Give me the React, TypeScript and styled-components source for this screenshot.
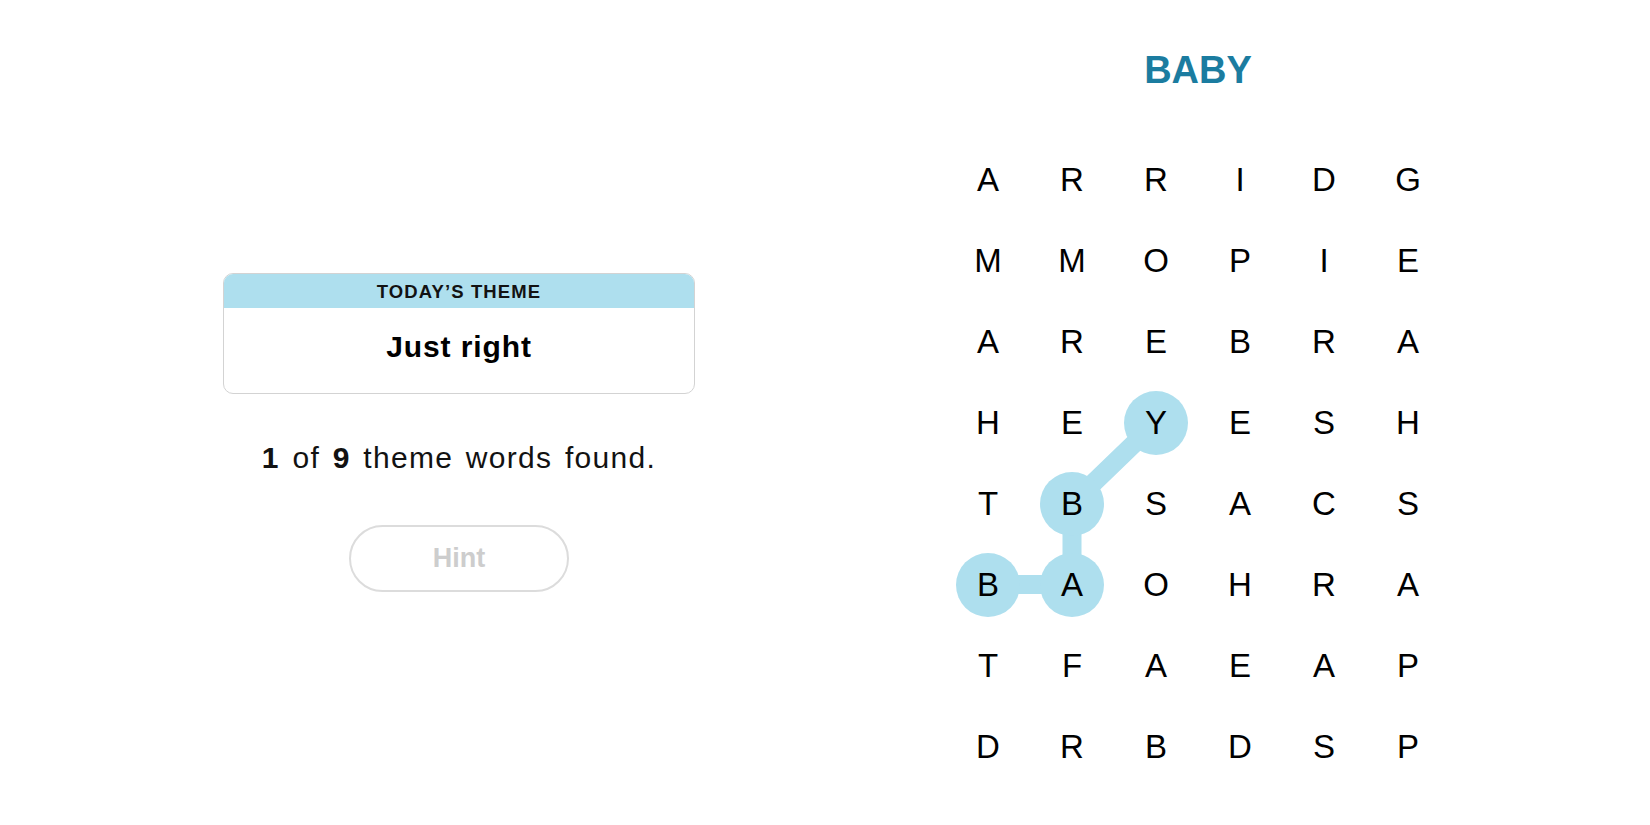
import styled, { createGlobalStyle } from 'styled-components'

const GlobalStyle = createGlobalStyle`
  html, body {
    margin: 0;
    padding: 0;
    background: #ffffff;
  }
  body {
    font-family: "Liberation Sans", Arial, sans-serif;
    color: #121212;
  }
`

const CELL_W = 84
const CELL_H = 81

const board = [
  'ARRIDG',
  'MMOPIE',
  'AREBRA',
  'HEYESH',
  'TBSACS',
  'BAOHRA',
  'TFAEAP',
  'DRBDSP',
]

// the word being traced: BABY, as [row, col]
const path: [number, number][] = [
  [5, 0],
  [5, 1],
  [4, 1],
  [3, 2],
]

const isOnPath = (r: number, c: number) => path.some(([pr, pc]) => pr === r && pc === c)

const Page = styled.main`
  display: flex;
  width: 1650px;
  height: 825px;
  overflow: hidden;
`

const Side = styled.section`
  width: 918px;
  display: flex;
  flex-direction: column;
  align-items: center;
  padding-top: 273px;
  box-sizing: border-box;
`

const ThemeCard = styled.div`
  width: 472px;
  border: 1px solid #d3d3d3;
  border-radius: 10px;
  overflow: hidden;
  box-sizing: border-box;
`

const ThemeHead = styled.div`
  height: 34px;
  background: #aedfee;
  font-size: 18.5px;
  line-height: 35px;
  font-weight: 700;
  letter-spacing: 1.1px;
  text-align: center;
  color: #121212;
`

const ThemeBody = styled.div`
  padding: 21px 0 28px;
  font-size: 30px;
  line-height: 36px;
  font-weight: 700;
  letter-spacing: 0.9px;
  text-align: center;
  color: #000;
`

const Progress = styled.p`
  margin: 48px 0 0;
  font-size: 30px;
  line-height: 32px;
  letter-spacing: 1.3px;
  word-spacing: 3px;
  color: #121212;

  b {
    font-weight: 700;
  }
`

const HintButton = styled.button`
  margin-top: 51px;
  width: 220px;
  height: 67px;
  border: 2px solid #dcdcdc;
  border-radius: 34px;
  background: #fff;
  font-family: "Liberation Sans", Arial, sans-serif;
  font-size: 27px;
  font-weight: 700;
  color: #cdcdcd;
  cursor: default;
`

const Board = styled.section`
  width: 560px;
  display: flex;
  flex-direction: column;
  align-items: center;
  padding-top: 47px;
`

const Word = styled.h1`
  margin: 0;
  font-size: 38px;
  line-height: 46px;
  font-weight: 700;
  color: #1b7ca0;
`

const Grid = styled.div`
  position: relative;
  margin-top: 46px;
  display: grid;
  grid-template-columns: repeat(6, ${CELL_W}px);
  grid-auto-rows: ${CELL_H}px;
`

const Trail = styled.svg`
  position: absolute;
  inset: 0;
  pointer-events: none;
`

const Cell = styled.div`
  position: relative;
  display: flex;
  align-items: center;
  justify-content: center;
`

const Letter = styled.span<{ $on: boolean }>`
  position: relative;
  display: flex;
  align-items: center;
  justify-content: center;
  width: 64px;
  height: 64px;
  border-radius: 50%;
  background: ${(p) => (p.$on ? '#aedfee' : 'transparent')};
  font-size: 33px;
  line-height: 1;
  color: #000;
`

const cx = (c: number) => c * CELL_W + CELL_W / 2
const cy = (r: number) => r * CELL_H + CELL_H / 2

export default function App() {
  return (
    <>
      <GlobalStyle />
      <Page>
        <Side>
          <ThemeCard>
            <ThemeHead>TODAY’S THEME</ThemeHead>
            <ThemeBody>Just right</ThemeBody>
          </ThemeCard>
          <Progress>
            <b>1</b> of <b>9</b> theme words found.
          </Progress>
          <HintButton disabled>Hint</HintButton>
        </Side>

        <Board>
          <Word>BABY</Word>
          <Grid>
            <Trail width={CELL_W * 6} height={CELL_H * 8} aria-hidden="true">
              <polyline
                points={path.map(([r, c]) => `${cx(c)},${cy(r)}`).join(' ')}
                fill="none"
                stroke="#aedfee"
                strokeWidth={19}
                strokeLinejoin="round"
              />
            </Trail>
            {board.map((row, r) =>
              row.split('').map((ch, c) => (
                <Cell key={`${r}-${c}`}>
                  <Letter $on={isOnPath(r, c)}>{ch}</Letter>
                </Cell>
              )),
            )}
          </Grid>
        </Board>
      </Page>
    </>
  )
}
